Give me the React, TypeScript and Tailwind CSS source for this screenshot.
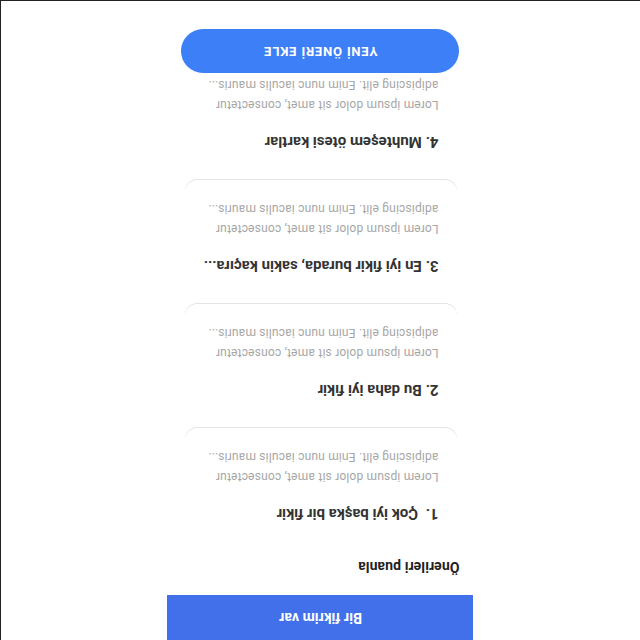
import React from "react";

const cards = [
  { title: "1.\u00a0 Çok iyi başka bir fikir" },
  { title: "2. Bu daha iyi fikir" },
  { title: "3. En iyi fikir burada, sakin kaçıra..." },
  { title: "4. Muhteşem ötesi kartlar" },
];

export default function App() {
  return (
    <div
      className="relative w-[640px] h-[640px] overflow-hidden bg-white border-r border-b border-[#222] rotate-180"
      style={{ fontFamily: "Roboto, 'Noto Sans', Arial, sans-serif" }}
    >
      <div className="mx-auto w-[306px] h-[45px] bg-[#4270ea] flex items-center justify-center text-white text-[14px] font-bold tracking-[0.1px]">
        Bir fikrim var
      </div>
      <div className="mx-auto w-[280px]">
        <div className="mt-[18px] pl-[1px] text-[14px] leading-[20px] font-bold text-[#222] tracking-[0.1px]">
          Önerileri puanla
        </div>
        <div className="mt-[17px] flex flex-col gap-[12px]">
          {cards.map((c) => (
            <div
              key={c.title}
              className="ml-[3px] w-[272px] h-[112px] rounded-xl bg-white shadow-[0_1px_0_#e4e4e4] pl-[19px] pr-3 pt-[16px]"
            >
              <div className="text-[15px] leading-[20px] font-bold text-[#333] whitespace-pre">
                {c.title}
              </div>
              <div className="mt-[17px] text-[12px] leading-[20px] text-[#a6a6a6] tracking-[0.18px]">
                Lorem ipsum dolor sit amet, consectetur
                <br />
                adipiscing elit. Enim nunc iaculis mauris...
              </div>
            </div>
          ))}
        </div>
      </div>
      <div className="absolute inset-x-0 bottom-[28px] flex justify-center">
        <button className="w-[278px] h-[44px] rounded-full bg-[#3d7ff6] text-white text-[13px] font-bold tracking-[0.06em] flex items-center justify-center">
          YENİ ÖNERİ EKLE
        </button>
      </div>
    </div>
  );
}
